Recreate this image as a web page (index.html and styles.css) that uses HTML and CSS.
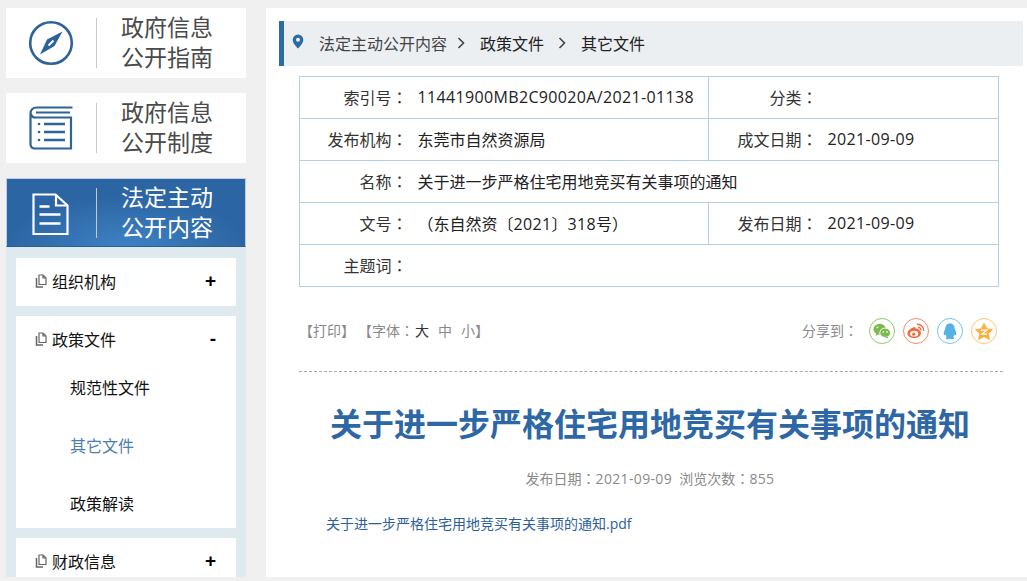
FILE: index.html
```html
<!DOCTYPE html>
<html lang="zh-CN">
<head>
<meta charset="utf-8">
<title>关于进一步严格住宅用地竞买有关事项的通知</title>
<link rel="stylesheet" href="styles.css">
</head>
<body>
<div class="page">
  <aside class="sidebar">
    <a class="tile">
      <span class="tile-icon"><svg width="46" height="46" viewBox="0 0 46 46"><circle cx="23" cy="23" r="20.800" fill="none" stroke="#2d6396" stroke-width="2.600"/><path d="M34.500 11.500 L26.500 26 L12 34.500 L19 19.500 Z" fill="#2d6396"/><path d="M25.500 20.500 L20.500 25.500" stroke="#fff" stroke-width="2"/></svg></span>
      <span class="tile-text">政府信息<br>公开指南</span>
    </a>
    <a class="tile">
      <span class="tile-icon"><svg width="46" height="46" viewBox="0 0 46 46"><path d="M44.500 2.500 H9 Q2.500 2.500 2.500 9 V39 Q2.500 43.500 7 43.500 H43 V12.500 H7.500 Q3.500 12.500 3 9" fill="none" stroke="#2d6396" stroke-width="2.200"/><path d="M8 7.500 H42" stroke="#2d6396" stroke-width="2.200"/><path d="M16 19 H37 M16 27 H37 M16 35 H37" stroke="#2d6396" stroke-width="2.400"/><circle cx="11" cy="19" r="1.300" fill="#2d6396"/><circle cx="11" cy="27" r="1.300" fill="#2d6396"/><circle cx="11" cy="35" r="1.300" fill="#2d6396"/></svg></span>
      <span class="tile-text">政府信息<br>公开制度</span>
    </a>
    <a class="tile tile-active">
      <span class="tile-icon"><svg width="46" height="46" viewBox="0 0 46 46"><path d="M4.500 4.500 H26.500 L38.500 15.500 V44 H4.500 Z" fill="none" stroke="#fff" stroke-width="2.200"/><path d="M27 5 V15.500 H38.500" fill="none" stroke="#fff" stroke-width="2.200"/><path d="M10.500 16.500 H20.500 M10.500 24.500 H31.500 M10.500 33.500 H31.500" stroke="#fff" stroke-width="2.400"/></svg></span>
      <span class="tile-text">法定主动<br>公开内容</span>
    </a>
    <nav class="menu">
      <div class="menu-item">
        <div class="menu-head"><svg class="copy" width="12" height="14" viewBox="0 0 12 14"><path d="M4 1 H8 L11 4 V10.500 H4 Z M8 1 V4 H11" fill="none" stroke="#666" stroke-width="1.200"/><path d="M1.500 4 V13 H8" fill="none" stroke="#666" stroke-width="1.500"/></svg><span class="menu-label">组织机构</span><b class="menu-sign">+</b></div>
      </div>
      <div class="menu-item">
        <div class="menu-head"><svg class="copy" width="12" height="14" viewBox="0 0 12 14"><path d="M4 1 H8 L11 4 V10.500 H4 Z M8 1 V4 H11" fill="none" stroke="#666" stroke-width="1.200"/><path d="M1.500 4 V13 H8" fill="none" stroke="#666" stroke-width="1.500"/></svg><span class="menu-label">政策文件</span><b class="menu-sign">-</b></div>
        <ul class="submenu">
          <li>规范性文件</li>
          <li class="current">其它文件</li>
          <li>政策解读</li>
        </ul>
      </div>
      <div class="menu-item">
        <div class="menu-head"><svg class="copy" width="12" height="14" viewBox="0 0 12 14"><path d="M4 1 H8 L11 4 V10.500 H4 Z M8 1 V4 H11" fill="none" stroke="#666" stroke-width="1.200"/><path d="M1.500 4 V13 H8" fill="none" stroke="#666" stroke-width="1.500"/></svg><span class="menu-label">财政信息</span><b class="menu-sign">+</b></div>
      </div>
    </nav>
  </aside>
  <main class="content">
    <div class="crumbs">
      <svg class="pin" width="12" height="15" viewBox="0 0 12 15"><path fill-rule="evenodd" d="M6 0.500 A5.300 5.300 0 0 1 11.300 5.800 C11.300 9 8 12.500 6 14.500 C4 12.500 0.700 9 0.700 5.800 A5.300 5.300 0 0 1 6 0.500 Z M6 3.800 A2 2 0 1 0 6 7.800 A2 2 0 1 0 6 3.800 Z" fill="#2d6ba3"/></svg>
      <span class="crumb-first">法定主动公开内容</span>
      <svg class="chev chev-a" width="8" height="12" viewBox="0 0 8 12"><path d="M1.500 1 L6.500 6 L1.500 11" fill="none" stroke="#444" stroke-width="1.600"/></svg>
      <span class="crumb">政策文件</span>
      <svg class="chev chev-b" width="8" height="12" viewBox="0 0 8 12"><path d="M1.500 1 L6.500 6 L1.500 11" fill="none" stroke="#444" stroke-width="1.600"/></svg>
      <span class="crumb">其它文件</span>
    </div>
    <table class="info">
      <colgroup><col class="c1"><col class="c2"><col class="c3"><col class="c4"></colgroup>
      <tr><th>索引号<span class="tc" lang="zh-TW">：</span></th><td><span class="num">11441900MB2C90020A/2021-01138</span></td><th>分类<span class="tc" lang="zh-TW">：</span></th><td></td></tr>
      <tr><th>发布机构<span class="tc" lang="zh-TW">：</span></th><td>东莞市自然资源局</td><th>成文日期<span class="tc" lang="zh-TW">：</span></th><td><span class="num">2021-09-09</span></td></tr>
      <tr><th>名称<span class="tc" lang="zh-TW">：</span></th><td colspan="3">关于进一步严格住宅用地竞买有关事项的通知</td></tr>
      <tr><th>文号<span class="tc" lang="zh-TW">：</span></th><td><span class="tc" lang="zh-TW">（</span>东自然资〔<span class="num">2021</span>〕<span class="num">318</span>号<span class="tc" lang="zh-TW">）</span></td><th>发布日期<span class="tc" lang="zh-TW">：</span></th><td><span class="num">2021-09-09</span></td></tr>
      <tr><th>主题词<span class="tc" lang="zh-TW">：</span></th><td colspan="3"></td></tr>
    </table>
    <div class="tools">
      <div class="tools-left">
        <span>【打印】</span>
        <span class="font-size">【字体<span class="tc" lang="zh-TW">：</span><i class="dark">大</i><i>中</i><i>小</i>】</span>
      </div>
      <div class="share">
        <span class="share-label">分享到<span class="tc" lang="zh-TW">：</span></span>
        <span class="share-btn b-wx"><svg width="20" height="18" viewBox="0 0 20 18"><ellipse cx="7.500" cy="7" rx="7" ry="6" fill="#7cba4f"/><path d="M3.500 11 L3 14.500 L7 12 Z" fill="#7cba4f"/><ellipse cx="13.500" cy="11" rx="6" ry="5.200" fill="#7cba4f" stroke="#fff" stroke-width="1"/><path d="M16 15 L17 17.500 L13.500 16 Z" fill="#7cba4f"/><circle cx="11.500" cy="10" r="0.900" fill="#fff"/><circle cx="15.500" cy="10" r="0.900" fill="#fff"/><circle cx="5" cy="5" r="0.900" fill="#fff"/></svg></span>
        <span class="share-btn b-wb"><svg width="20" height="18" viewBox="0 0 20 18"><ellipse cx="8" cy="11.500" rx="7.500" ry="5.500" fill="#f26a3c"/><path d="M1.500 11 Q3 5 9.500 4.500 Q9.500 7 8 7.500 L4 10 Z" fill="#f26a3c"/><ellipse cx="8" cy="12" rx="4.500" ry="3.200" fill="#fff"/><circle cx="7.500" cy="12.500" r="1.800" fill="#f26a3c"/><path d="M11 1.500 A7 7 0 0 1 18.500 9" fill="none" stroke="#f26a3c" stroke-width="1.500"/><path d="M12 5 A3.500 3.500 0 0 1 15.500 8.500" fill="none" stroke="#f26a3c" stroke-width="1.500"/></svg></span>
        <span class="share-btn b-qq"><svg width="16" height="19" viewBox="0 0 16 19"><path d="M8 0.500 C12 0.500 13.200 3.500 13.200 6.500 C14.500 9 15.500 11.500 14.800 13.500 C14 14 13.500 13 13 12.500 C12.800 14 12.200 15 11.500 15.500 C13 16 13 18 10.500 18 C9 18 8.500 17.500 8 17.500 C7.500 17.500 7 18 5.500 18 C3 18 3 16 4.500 15.500 C3.800 15 3.200 14 3 12.500 C2.500 13 2 14 1.200 13.500 C0.500 11.500 1.500 9 2.800 6.500 C2.800 3.500 4 0.500 8 0.500 Z" fill="#55b2e6"/></svg></span>
        <span class="share-btn b-qz"><svg width="20" height="19" viewBox="0 0 20 19"><path d="M10 0.500 L13 6.500 L19.500 7.300 L14.800 11.800 L16 18.300 L10 15.200 L4 18.300 L5.200 11.800 L0.500 7.300 L7 6.500 Z" fill="#f9b040" stroke="#f9b040" stroke-linejoin="round"/><path d="M6.500 8 H13 L7.500 12.500 H13.500" fill="none" stroke="#fff" stroke-width="1.400"/></svg></span>
      </div>
    </div>
    <h1 class="title">关于进一步严格住宅用地竞买有关事项的通知</h1>
    <p class="meta">发布日期<span class="tc" lang="zh-TW">：</span><span class="num">2021-09-09</span>&nbsp;&nbsp;浏览次数<span class="tc" lang="zh-TW">：</span><span class="num">855</span></p>
    <p class="attach">关于进一步严格住宅用地竞买有关事项的通知.pdf</p>
  </main>
</div>
</body>
</html>
```
FILE: styles.css
```css
* { box-sizing: border-box; }
html, body { margin: 0; padding: 0; height: 581px; overflow: hidden; background: #f0f0f0; }
body { font-family: "Open Sans", "Noto Sans CJK SC", sans-serif; color: #333; }
.page { display: flex; gap: 20px; padding: 8px 0 0 6px; height: 577px; }
.tc { font-family: "Noto Sans CJK TC", sans-serif; }
.num { letter-spacing: 0.35px; }

.sidebar { width: 240px; flex: none; display: flex; flex-direction: column; }
.tile { display: flex; align-items: center; height: 70px; background: #fff; margin-bottom: 15px; }
.tile-icon { width: 91px; height: 50px; flex: none; display: flex; align-items: center; justify-content: center; border-right: 1px solid #c8c8c8; }
.tile-text { margin: -3px 0 0 24px; font-size: 23px; line-height: 30px; color: #4a4a4a; }
.tile-active { background: radial-gradient(ellipse 120px 50px at 50% 100%, #3e82c4, #2c65a3); border: 1px solid #bcd0e0; border-bottom-color: #2a5f96; margin-bottom: 0; height: 69px; }
.tile-active .tile-icon { width: 90px; }
.tile-active .tile-text { color: #fff; margin-top: -2px; }
.menu { background: #dfeaef; padding: 11px 10px 0; flex: 1; overflow: hidden; }
.menu-item { background: #fff; margin-bottom: 10px; }
.menu-head { display: flex; align-items: center; height: 48px; padding: 0 19px 2px 19px; color: #111; }
.copy { flex: none; margin-right: 5px; }
.menu-label { font-size: 16px; flex: 1; }
.menu-sign { font-size: 19px; color: #000; font-family: "Liberation Sans", sans-serif; margin-right: 1px; }
.submenu { list-style: none; margin: 0; padding: 0 0 0 54px; }
.submenu li { height: 58px; line-height: 60px; font-size: 16px; color: #111; }
.submenu li:first-child { margin-top: -6px; }
.submenu li.current { color: #4a7fae; }
.submenu li:last-child { height: 54px; }

.content { flex: 1; background: #fff; padding: 13px 4px 0 13px; }
.crumbs { display: flex; align-items: center; height: 45px; background: #eceff2; border-left: 5px solid #2d6ba3; padding: 0 0 2px 8px; font-size: 16px; color: #333; }
.pin { flex: none; margin-right: 15px; margin-top: -3px; }
.crumb-first { color: #444; }
.crumb { color: #222; }
.chev { flex: none; }
.chev-a { margin: 0 15px 0 10px; }
.chev-b { margin: 0 15px 0 14px; }

.info { margin: 10px 0 0 20px; width: 699px; table-layout: fixed; border-collapse: collapse; font-size: 16px; }
.c1 { width: 112px; } .c2 { width: 297px; } .c3 { width: 113px; } .c4 { width: 177px; }
.info th, .info td { border: 1px solid #b2cfe6; height: 42px; padding: 0 0 2px; font-weight: normal; color: #222; white-space: nowrap; }
.info th { text-align: right; padding-right: 4px; border-right: 0; color: #333; }
.info td { text-align: left; padding-left: 6px; border-left: 0; }
.info th:nth-child(3) { border-left: 1px solid #b2cfe6; }
.info td:nth-child(2) { border-right: 1px solid #b2cfe6; }

.tools { display: flex; justify-content: space-between; align-items: center; margin: 29px 0 0 20px; height: 30px; width: 704px; font-size: 14px; color: #8a8a8a; }
.tools-left { display: flex; gap: 3px; padding-bottom: 2px; }
.font-size i { font-style: normal; margin-right: 9px; }
.font-size i:nth-of-type(3) { margin-right: 0; }
.font-size .dark { color: #333; margin-left: 1px; }
.share { display: flex; align-items: center; gap: 8px; padding-right: 6px; }
.share-label { margin-right: 3px; padding-bottom: 2px; }
.share-btn { width: 26px; height: 26px; border: 1px solid; border-radius: 50%; display: flex; align-items: center; justify-content: center; }
.b-wx { border-color: #8ccb66; } .b-wb { border-color: #f58c68; } .b-qq { border-color: #79c2ec; } .b-qz { border-color: #fbc670; }
.share-btn svg { transform: scale(0.9); }

.title { margin: 25px 0 0 20px; border-top: 1px dashed #aaa; width: 704px; text-align: center; font-size: 32px; font-weight: bold; line-height: 46px; color: #2e67a5; padding: 29px 2px 0 0; }
.meta { margin: 21px 0 0; text-align: center; font-size: 14px; line-height: 20px; color: #8a8a8a; padding-right: 2px; }
.attach { margin: 25px 0 0 47px; font-size: 14px; line-height: 20px; color: #2d6098; }
```
